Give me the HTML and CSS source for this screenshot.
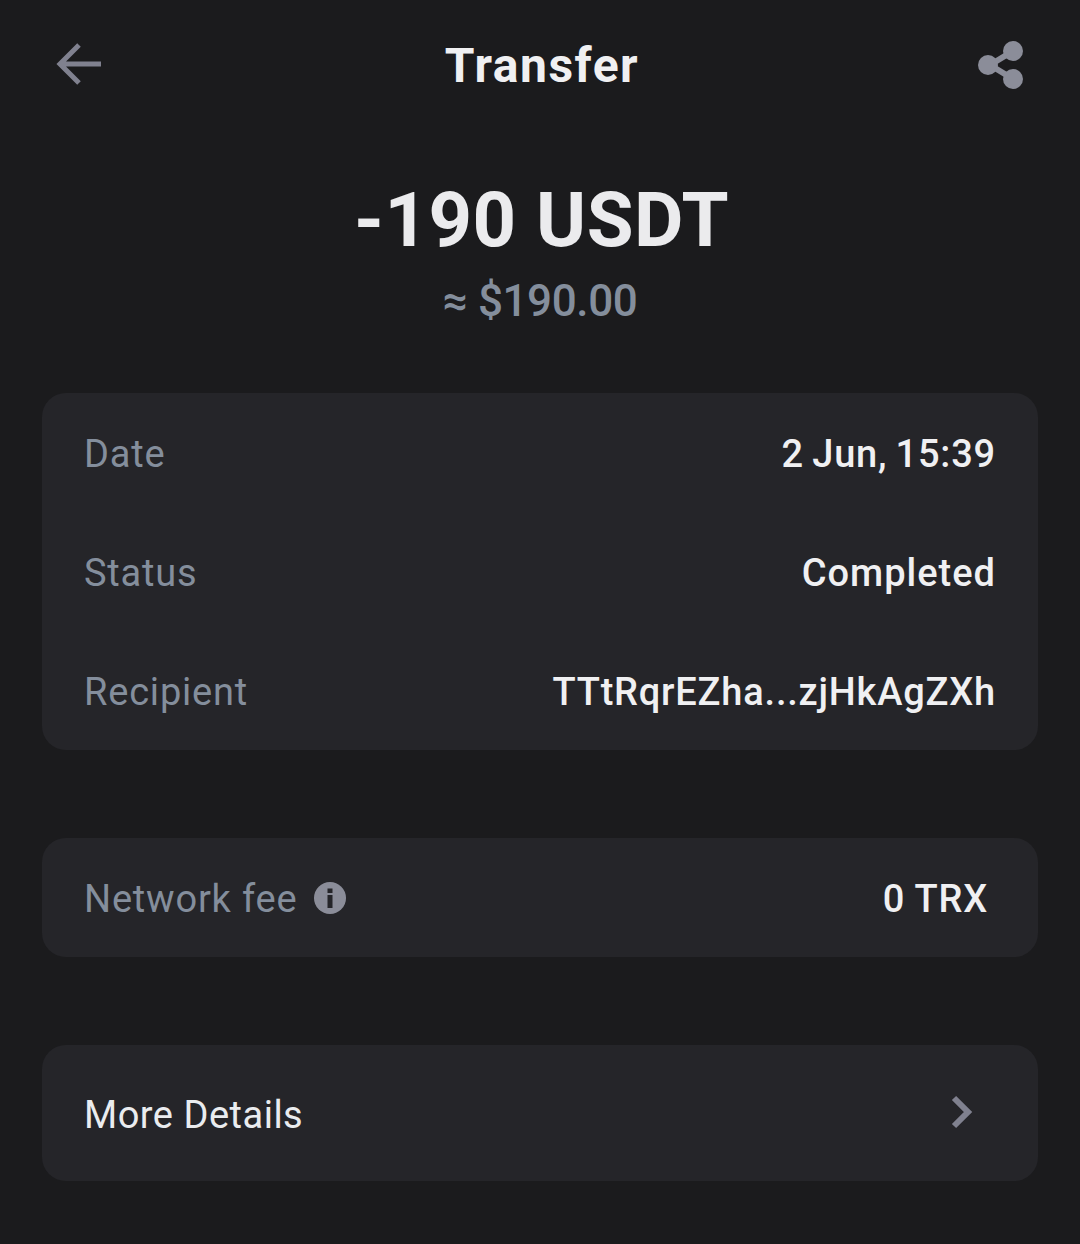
FILE: index.html
```html
<!DOCTYPE html>
<html lang="en">
<head>
  <meta charset="UTF-8">
  <title>Transfer</title>
  <link rel="stylesheet" href="styles.css">
</head>
<body>
  <header class="topbar">
    <svg class="icon" width="48" height="48" viewBox="0 0 48 48">
      <path d="M46 23H5M24 4L5 23l19 19" fill="none" stroke="#80818f" stroke-width="5"/>
    </svg>
    <h1>Transfer</h1>
    <svg class="icon" width="48" height="50" viewBox="0 0 48 50">
      <path d="M13 25L36 11M13 25l23 14" stroke="#8b8d99" stroke-width="6"/>
      <circle cx="36" cy="11" r="10" fill="#8b8d99"/>
      <circle cx="11" cy="25" r="10" fill="#8b8d99"/>
      <circle cx="36" cy="39" r="10" fill="#8b8d99"/>
    </svg>
  </header>

  <section class="amount">
    <div class="amount-main">-190 USDT</div>
    <div class="amount-fiat">≈ $190.00</div>
  </section>

  <section class="card card-info">
    <div class="row"><span class="label">Date</span><span class="value value-date">2 Jun, 15:39</span></div>
    <div class="row"><span class="label">Status</span><span class="value value-status">Completed</span></div>
    <div class="row"><span class="label">Recipient</span><span class="value">TTtRqrEZha...zjHkAgZXh</span></div>
  </section>

  <section class="card card-fee">
    <div class="row">
      <span class="label label-info">Network fee
        <svg class="info-icon" width="32" height="32" viewBox="0 0 32 32">
          <circle cx="16" cy="16" r="16" fill="#8b8d99"/>
          <rect x="13.5" y="6.5" width="5" height="4.5" fill="#252529"/>
          <rect x="13.5" y="13" width="5" height="13" fill="#252529"/>
        </svg>
      </span>
      <span class="value value-fee">0 TRX</span>
    </div>
  </section>

  <section class="card card-more">
    <div class="row row-more">
      <span class="link">More Details</span>
      <svg class="chevron" width="24" height="34" viewBox="0 0 24 34">
        <path d="M4 3l14 14L4 31" fill="none" stroke="#80818f" stroke-width="6"/>
      </svg>
    </div>
  </section>
</body>
</html>
```

FILE: styles.css
```css
body {
  margin: 0;
  background: #1b1b1d;
  font-family: 'Roboto', 'Liberation Sans', sans-serif;
  color: #eaecef;
}

.topbar {
  display: flex;
  justify-content: space-between;
  align-items: center;
  height: 130px;
  padding: 0 55px;
}

.topbar h1 {
  margin: 0 0 0 4px;
  font-size: 48px;
  font-weight: 700;
  letter-spacing: 1.5px;
  color: #f0f0f2;
}

.amount {
  display: flex;
  flex-direction: column;
  align-items: center;
  height: 263px;
}

.amount-main {
  margin: 44px 0 0 3px;
  font-size: 76px;
  line-height: 92px;
  font-weight: 700;
  letter-spacing: 0.5px;
  color: #ebebed;
}

.amount-fiat {
  margin-top: 10px;
  font-size: 44px;
  line-height: 50px;
  font-weight: 500;
  letter-spacing: -0.4px;
  color: #848e9c;
}

.card {
  margin: 0 42px;
  background: #252529;
  border-radius: 24px;
}

.card-fee,
.card-more {
  margin-top: 88px;
}

.row {
  box-sizing: border-box;
  display: flex;
  justify-content: space-between;
  align-items: center;
  height: 119px;
  padding: 2px 42px 0;
  font-size: 38px;
  letter-spacing: 0.8px;
}

.label {
  color: #848e9c;
}

.label-info {
  display: flex;
  align-items: center;
  gap: 17px;
}

.info-icon {
  margin-top: -2px;
}

.value {
  color: #f0f0f2;
  font-weight: 500;
}

.value-date {
  word-spacing: -2px;
}

.value-status {
  letter-spacing: 1px;
}

.value-fee {
  margin-right: 8px;
}

.row-more {
  height: 136px;
  padding: 4px 64px 0 42px;
  letter-spacing: 0.5px;
}

.chevron {
  margin-top: -6px;
}

.link {
  color: #eaecef;
}
```
